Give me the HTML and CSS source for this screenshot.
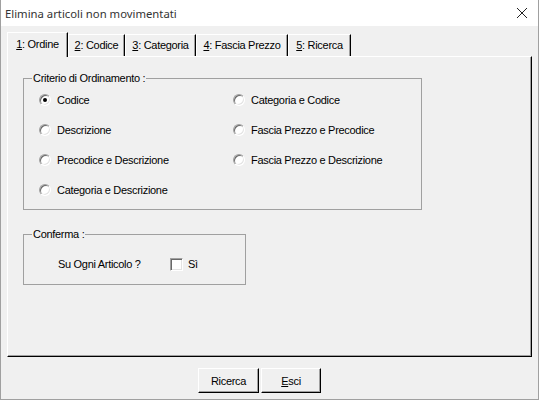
FILE: index.html
```html
<!DOCTYPE html>
<html lang="it">
  <head>
    <meta charset="UTF-8" />
    <title>Elimina articoli non movimentati</title>
    <link rel="stylesheet" href="styles.css">
  </head>
  <body>
    <div class="window">
      <div class="title-bar">
        <span class="title">Elimina articoli non movimentati</span>
        <svg class="close" width="12" height="12" viewBox="0 0 12 12">
          <path d="M1 1 L11 11 M11 1 L1 11" stroke="#222" stroke-width="1" fill="none" />
        </svg>
      </div>
      <div class="client">
        <div class="tabs">
          <div class="tab tab-active tab-1"><u>1</u>: Ordine</div>
          <div class="tab tab-2"><u>2</u>: Codice</div>
          <div class="tab tab-3"><u>3</u>: Categoria</div>
          <div class="tab tab-4"><u>4</u>: Fascia Prezzo</div>
          <div class="tab tab-5"><u>5</u>: Ricerca</div>
        </div>
        <div class="panel">
          <fieldset class="group group-order">
            <legend>Criterio di Ordinamento :</legend>
            <div class="options">
              <label class="option"><span class="radio checked"></span>Codice</label>
              <label class="option"><span class="radio"></span>Descrizione</label>
              <label class="option"><span class="radio"></span>Precodice e Descrizione</label>
              <label class="option"><span class="radio"></span>Categoria e Descrizione</label>
              <label class="option"><span class="radio"></span>Categoria e Codice</label>
              <label class="option"><span class="radio"></span>Fascia Prezzo e Precodice</label>
              <label class="option"><span class="radio"></span>Fascia Prezzo e Descrizione</label>
            </div>
          </fieldset>
          <fieldset class="group group-confirm">
            <legend>Conferma :</legend>
            <div class="confirm-row">
              <span class="confirm-label">Su Ogni Articolo ?</span>
              <span class="checkbox"></span>
              <span>Sì</span>
            </div>
          </fieldset>
        </div>
        <div class="buttons">
          <button class="btn btn-search">Ricerca</button>
          <button class="btn btn-exit"><u>E</u>sci</button>
        </div>
      </div>
    </div>
  </body>
</html>
```

FILE: styles.css
```css
body {
  margin: 0;
  font-family: "Liberation Sans", Arial, sans-serif;
  font-size: 11px;
  letter-spacing: -0.3px;
  color: #000;
  background-color: #f0f0f0;
}

.window {
  width: 539px;
  height: 400px;
  box-sizing: border-box;
  border: 1px solid #a0a0a0;
  border-top: none;
  background-color: #f0f0f0;
}

.title-bar {
  height: 26px;
  background-color: #fff;
  display: flex;
  align-items: center;
  justify-content: space-between;
  padding: 0 10px 0 4px;
}

.title {
  font-family: "Noto Sans", "Open Sans", sans-serif;
  font-size: 11.3px;
  letter-spacing: 0;
  color: #333;
}

.close {
  display: block;
}

.client {
  padding: 6px 6px 0 6px;
}

.tabs {
  display: flex;
  align-items: flex-end;
  height: 24px;
}

.tab {
  box-sizing: border-box;
  height: 22px;
  line-height: 20px;
  text-align: center;
  border-top: 1px solid #fff;
  border-left: 1px solid #fff;
  border-right: 1px solid #000;
  box-shadow: inset -1px 0 0 #a0a0a0;
  background-color: #f0f0f0;
}

.tab-active {
  position: relative;
  z-index: 1;
  height: 25px;
  line-height: 22px;
  margin-bottom: -1px;
}

.tab-1 { width: 61px; }
.tab-2 { width: 57px; }
.tab-3 { width: 71px; }
.tab-4 { width: 92px; }
.tab-5 { width: 63px; }

.panel {
  box-sizing: border-box;
  width: 525px;
  height: 301px;
  border-top: 1px solid #fff;
  border-left: 1px solid #fff;
  border-right: 1px solid #000;
  border-bottom: 1px solid #000;
  box-shadow: inset -1px -1px 0 #a0a0a0;
  padding: 15px 0 0 15px;
}

.group {
  margin: 0;
  padding: 0;
  min-width: 0;
  box-sizing: border-box;
  border: 1px solid #a0a0a0;
}

.group legend {
  margin-left: 8px;
  padding: 0 1px;
  line-height: 13px;
}

.group-order {
  width: 399px;
}

.options {
  display: grid;
  grid-auto-flow: column;
  grid-template-rows: repeat(4, 30px);
  grid-template-columns: 194px auto;
  padding: 0 0 4px 15px;
}

.option {
  display: flex;
  align-items: center;
  gap: 6px;
}

.radio {
  position: relative;
  width: 12px;
  height: 12px;
  box-sizing: border-box;
  border-radius: 50%;
  background-color: #fff;
  border: 1px solid;
  border-color: #a0a0a0 #fff #fff #a0a0a0;
  box-shadow: inset 1px 1px 0 #696969, inset -1px -1px 0 #e3e3e3;
}

.radio.checked::after {
  content: "";
  position: absolute;
  left: 3px;
  top: 3px;
  width: 4px;
  height: 4px;
  border-radius: 50%;
  background-color: #000;
}

.group-confirm {
  width: 223px;
  margin-top: 18px;
}

.confirm-row {
  display: flex;
  align-items: center;
  height: 24px;
  padding: 11px 0 8px 34px;
}

.confirm-label {
  width: 112px;
}

.checkbox {
  width: 13px;
  height: 13px;
  box-sizing: border-box;
  margin-right: 5px;
  background-color: #fff;
  border: 1px solid;
  border-color: #a0a0a0 #fff #fff #a0a0a0;
  box-shadow: inset 1px 1px 0 #696969, inset -1px -1px 0 #e3e3e3;
}

.buttons {
  display: flex;
  gap: 2px;
  padding: 11px 0 0 191px;
}

.btn {
  box-sizing: border-box;
  height: 25px;
  padding: 0;
  font-family: "Liberation Sans", Arial, sans-serif;
  font-size: 11px;
  letter-spacing: -0.3px;
  color: #000;
  background-color: #f0f0f0;
  border: 1px solid;
  border-color: #fff #000 #000 #fff;
  box-shadow: inset -1px -1px 0 #a0a0a0;
}

.btn-search { width: 61px; }
.btn-exit { width: 60px; }
```
